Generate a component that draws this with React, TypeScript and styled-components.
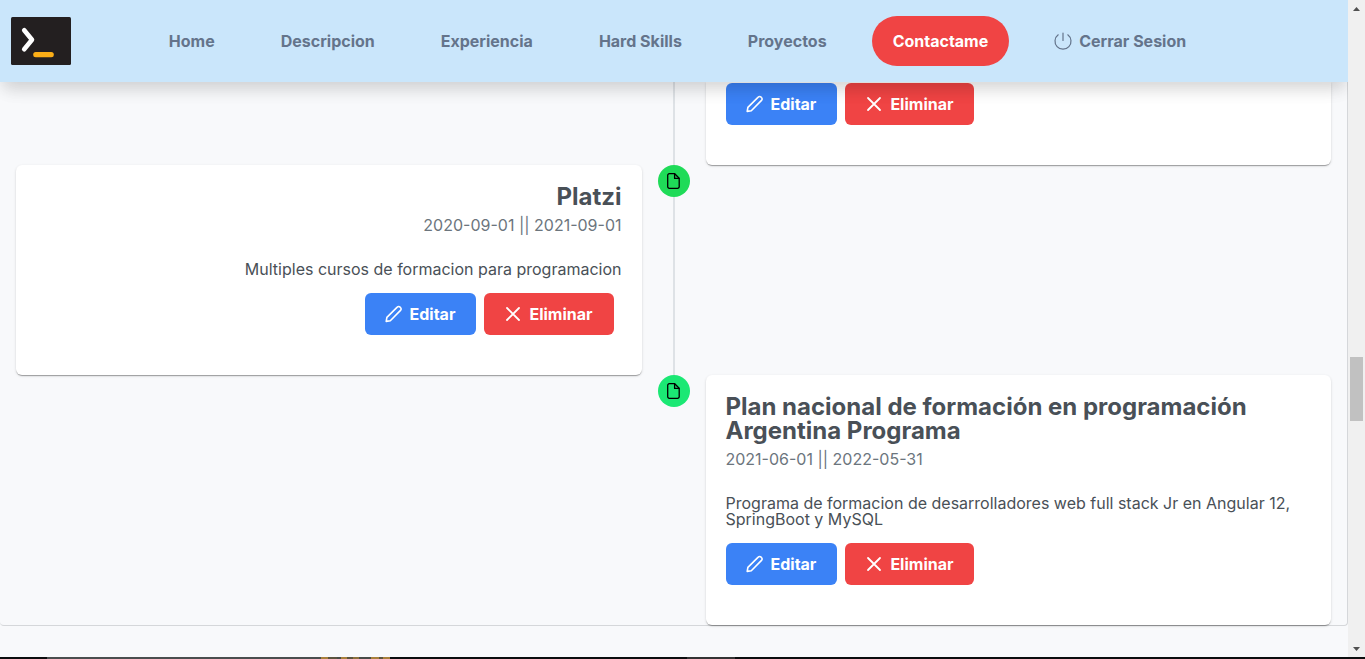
import React from "react";
import styled, { createGlobalStyle, css } from "styled-components";

const GlobalStyle = createGlobalStyle`
  *, *::before, *::after { box-sizing: border-box; }
  html { overflow: hidden; }
  body {
    margin: 0;
    background: #f8f9fb;
    color: #495057;
    font-family: Inter, "Liberation Sans", sans-serif;
    font-size: 16px;
    line-height: 16px;
  }
  h2, p { margin: 0; }
`;

const Page = styled.div`
  display: grid;
  grid-template-columns: minmax(0, 1fr) 17px;
  grid-template-rows: minmax(0, 1fr) 2px;
  height: 100vh;
`;

const Content = styled.div`
  min-height: 0;
  overflow: hidden;
`;

const Header = styled.header`
  position: relative;
  z-index: 2;
  display: flex;
  align-items: center;
  padding: 16px 76px 16px 11px;
  background: #cae6fb;
  box-shadow: 0 10px 15px -3px rgba(0, 0, 0, 0.12), 0 8px 20px -2px rgba(0, 0, 0, 0.06);
`;

const HomeLink = styled.a`
  display: flex;
`;

const Nav = styled.nav`
  display: flex;
  flex: 1;
  align-items: center;
  justify-content: center;
  gap: 24px;
  margin-left: 12px;
`;

const NavLink = styled.a<{ $primary?: boolean }>`
  display: flex;
  align-items: center;
  gap: 7px;
  height: 50px;
  padding: 0 21px;
  border-radius: 25px;
  color: #64748b;
  font-weight: 700;
  text-decoration: none;
  white-space: nowrap;
  ${({ $primary }) => $primary && css`
    background: #f04444;
    color: #ffffff;
    font-weight: 750;
  `}
`;

const Timeline = styled.main`
  border: solid #d5d7da;
  border-width: 0 1px 1px 0;
  border-radius: 0 0 4px 4px;
`;

const Event = styled.section<{ $reverse?: boolean }>`
  display: flex;
  flex-direction: ${({ $reverse }) => ($reverse ? "row-reverse" : "row")};
  text-align: ${({ $reverse }) => ($reverse ? "right" : "left")};
`;

const Side = styled.div`
  flex: 1;
  min-width: 0;
  padding: 0 16px;
`;

const Separator = styled.div`
  display: flex;
  flex-direction: column;
  align-items: center;
  width: 32px;
`;

const Marker = styled.span<{ $color: string }>`
  display: flex;
  align-items: center;
  justify-content: center;
  width: 32px;
  height: 32px;
  border-radius: 50%;
  background: ${({ $color }) => $color};
  color: #000000;
`;

const Connector = styled.span`
  flex: 1;
  width: 2px;
  background: #dee2e6;
`;

const Card = styled.article<{ $continued?: boolean }>`
  padding: ${({ $continued }) => ($continued ? "1px 20px 40px" : "20px 20px 40px")};
  border-radius: ${({ $continued }) => ($continued ? "0 0 6px 6px" : "6px")};
  background: #ffffff;
  box-shadow: 0 2px 1px -1px rgba(0, 0, 0, 0.2), 0 1px 1px 0 rgba(0, 0, 0, 0.14),
    0 1px 3px 0 rgba(0, 0, 0, 0.12);
`;

const Title = styled.h2`
  margin-bottom: 8px;
  font-size: 24px;
  line-height: 24px;
  font-weight: 700;
`;

const Dates = styled.p`
  margin-bottom: 28px;
  color: #6c757d;
`;

const Description = styled.p`
  margin-bottom: 16px;
`;

const Actions = styled.div<{ $end?: boolean }>`
  display: flex;
  gap: 8px;
  justify-content: ${({ $end }) => ($end ? "flex-end" : "flex-start")};
  padding-right: 8px;
`;

const Button = styled.button<{ $danger?: boolean }>`
  display: flex;
  align-items: center;
  gap: 7px;
  height: 42px;
  padding: 0 21px 0 20px;
  border: 0;
  border-radius: 6px;
  background: ${({ $danger }) => ($danger ? "#f04444" : "#3b82f6")};
  color: #ffffff;
  font: inherit;
  font-weight: 750;
`;

const NextSection = styled.footer`
  grid-column: 1 / -1;
  display: flex;
  background: #0b0d0e;
`;

const Strip = styled.span<{ $w: number; $color: string }>`
  width: ${({ $w }) => $w}px;
  background: ${({ $color }) => $color};
`;

const Scrollbar = styled.div`
  display: grid;
  grid-template-rows: 17px 340fr 64px 219fr 17px;
  justify-items: center;
  align-items: center;
  background: #f0f0f0;
`;

const Thumb = styled.div`
  grid-row: 3;
  width: 13px;
  height: 64px;
  background: #c1c1c1;
`;

const Arrow = styled.svg<{ $last?: boolean }>`
  grid-row: ${({ $last }) => ($last ? 5 : 1)};
  fill: #505050;
`;

const Icon = styled.svg`
  width: 18px;
  height: 18px;
  flex: none;
  fill: none;
  stroke: currentColor;
  stroke-linecap: round;
  stroke-linejoin: round;
`;

const FileIcon = () => (
  <Icon viewBox="0 0 18 18" strokeWidth="1.3" aria-hidden="true">
    <path d="M4.3 1.7h5.4L14.2 6.2v8.5a1.6 1.6 0 0 1-1.6 1.6H4.3a1.6 1.6 0 0 1-1.6-1.6V3.3a1.6 1.6 0 0 1 1.6-1.6z" />
    <path d="M9.6 2v4.4h4.3" />
  </Icon>
);

const PencilIcon = () => (
  <Icon viewBox="0 0 18 18" strokeWidth="1.6" aria-hidden="true">
    <path d="M1.2 16.4l.7-4L12.2 2.1a2 2 0 0 1 2.9 0l.4.4a2 2 0 0 1 0 2.9L5.3 15.7z" />
  </Icon>
);

const CrossIcon = () => (
  <Icon viewBox="0 0 18 18" strokeWidth="1.8" aria-hidden="true">
    <path d="M3 3l12 12M15 3L3 15" />
  </Icon>
);

const PowerIcon = () => (
  <Icon viewBox="0 0 18 18" strokeWidth="1.2" aria-hidden="true">
    <path d="M9 1v7.5M4.2 2.8a8 8 0 1 0 9.6 0" />
  </Icon>
);

const Logo = () => (
  <svg width="60" height="48" viewBox="0 0 60 48" role="img" aria-label="Terminal">
    <rect width="60" height="48" rx="1.5" fill="#231f20" />
    <path d="M13.2 13.2L21 22.8 13.2 32.2" fill="none" stroke="#fff" strokeWidth="4.6" strokeLinecap="round" strokeLinejoin="round" />
    <rect x="22.2" y="35" width="20.6" height="5.2" rx="2.5" fill="#fbae17" />
  </svg>
);

const EventActions = ({ end }: { end?: boolean }) => (
  <Actions $end={end}>
    <Button type="button"><PencilIcon />Editar</Button>
    <Button type="button" $danger><CrossIcon />Eliminar</Button>
  </Actions>
);

const links = ["Home", "Descripcion", "Experiencia", "Hard Skills", "Proyectos"];

const strips: [number, string][] = [
  [47, "#0b0d0e"], [274, "#4a4e4e"], [7, "#a8803c"], [9, "#5b543f"], [4, "#484b48"],
  [6, "#a8803c"], [6, "#5b543f"], [6, "#8c713d"], [12, "#484b48"], [8, "#a8803c"],
  [4, "#5b543f"], [7, "#a8803c"], [297, "#0b0d0e"], [48, "#333333"],
];

export default function App() {
  return (
    <>
      <GlobalStyle />
      <Page>
        <Content>
          <Header>
            <HomeLink href="#home"><Logo /></HomeLink>
            <Nav>
              {links.map((label) => <NavLink key={label} href="#">{label}</NavLink>)}
              <NavLink href="#contacto" $primary>Contactame</NavLink>
              <NavLink href="#salir"><PowerIcon />Cerrar Sesion</NavLink>
            </Nav>
          </Header>
          <Timeline>
            <Event>
              <Side />
              <Separator><Connector /></Separator>
              <Side>
                <Card $continued><EventActions /></Card>
              </Side>
            </Event>
            <Event $reverse>
              <Side />
              <Separator><Marker $color="#1fdb58"><FileIcon /></Marker><Connector /></Separator>
              <Side>
                <Card>
                  <Title>Platzi</Title>
                  <Dates>2020-09-01 || 2021-09-01</Dates>
                  <Description>Multiples cursos de formacion para programacion</Description>
                  <EventActions end />
                </Card>
              </Side>
            </Event>
            <Event>
              <Side />
              <Separator><Marker $color="#1be874"><FileIcon /></Marker></Separator>
              <Side>
                <Card>
                  <Title>Plan nacional de formación en programación Argentina Programa</Title>
                  <Dates>2021-06-01 || 2022-05-31</Dates>
                  <Description>
                    Programa de formacion de desarrolladores web full stack Jr en Angular 12, SpringBoot y MySQL
                  </Description>
                  <EventActions />
                </Card>
              </Side>
            </Event>
          </Timeline>
        </Content>
        <Scrollbar aria-hidden="true">
          <Arrow width="7" height="4" viewBox="0 0 7 4"><path d="M0 4L3.5 0 7 4z" /></Arrow>
          <Thumb />
          <Arrow $last width="7" height="4" viewBox="0 0 7 4"><path d="M0 0h7L3.5 4z" /></Arrow>
        </Scrollbar>
        <NextSection>
          {strips.map(([w, color], i) => <Strip key={i} $w={w} $color={color} />)}
        </NextSection>
      </Page>
    </>
  );
}
